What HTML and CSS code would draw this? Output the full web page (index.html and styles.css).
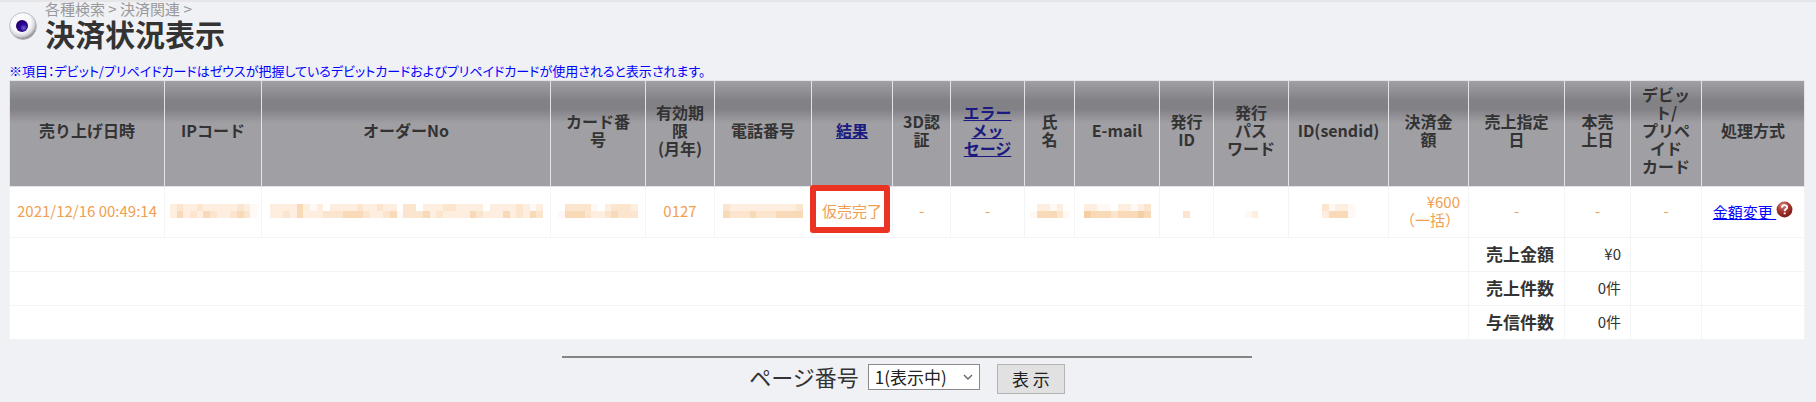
FILE: index.html
```html
<!DOCTYPE html>
<html lang="ja">
<head>
    <meta charset="UTF-8">
    <meta name="viewport" content="width=device-width, initial-scale=1.0">
    <title>決済状況表示</title>
    <link rel="stylesheet" href="styles.css">
</head>
<body>
    <header class="page-head">
        <svg class="bullet" viewBox="0 0 28 28" aria-hidden="true">
            <defs>
                <radialGradient id="ring" cx="42%" cy="36%" r="62%">
                    <stop offset="0.6" stop-color="#fafafc"/>
                    <stop offset="0.85" stop-color="#d0d0d4"/>
                    <stop offset="1" stop-color="#8c8c92"/>
                </radialGradient>
                <radialGradient id="core" cx="64%" cy="66%" r="60%">
                    <stop offset="0" stop-color="#7468c8"/>
                    <stop offset="0.5" stop-color="#2c0a96"/>
                    <stop offset="1" stop-color="#220070"/>
                </radialGradient>
            </defs>
            <circle cx="14" cy="14" r="13.4" fill="url(#ring)" stroke="#b4b4b8" stroke-width="0.8"/>
            <circle cx="13" cy="14" r="6" fill="url(#core)"/>
        </svg>
        <div>
            <p class="crumbs">各種検索 &gt; 決済関連 &gt;</p>
            <h1>決済状況表示</h1>
        </div>
    </header>

    <p class="note">※項目：デビット/プリペイドカードはゼウスが把握しているデビットカードおよびプリペイドカードが使用されると表示されます。</p>

    <table class="result">
        <colgroup>
            <col class="c-date"><col class="c-ip"><col class="c-order"><col class="c-card"><col class="c-exp">
            <col class="c-tel"><col class="c-status"><col class="c-3d"><col class="c-error"><col class="c-name">
            <col class="c-mail"><col class="c-pid"><col class="c-pass"><col class="c-send"><col class="c-amount">
            <col class="c-due"><col class="c-sale"><col class="c-debit"><col class="c-action">
        </colgroup>
        <thead>
            <tr>
                <th>売り上げ日時</th>
                <th>IPコード</th>
                <th>オーダーNo</th>
                <th>カード番<br>号</th>
                <th>有効期<br>限<br>(月年)</th>
                <th>電話番号</th>
                <th><a href="#">結果</a></th>
                <th>3D認<br>証</th>
                <th><a href="#">エラー<br>メッ<br>セージ</a></th>
                <th>氏<br>名</th>
                <th>E-mail</th>
                <th>発行<br>ID</th>
                <th>発行<br>パス<br>ワード</th>
                <th>ID(sendid)</th>
                <th>決済金<br>額</th>
                <th>売上指定<br>日</th>
                <th>本売<br>上日</th>
                <th>デビッ<br>ト/<br>プリペ<br>イド<br>カード</th>
                <th>処理方式</th>
            </tr>
        </thead>
        <tbody>
            <tr class="entry">
                <td>2021/12/16 00:49:14</td>
                <td class="mask" data-top="2322322222321" data-bottom="2423243223431"></td>
                <td class="mask" data-top="22224212022223223220330222332222022223212" data-bottom="22324222333444322341333423222243222423243"></td>
                <td class="mask" data-top="033331023332" data-bottom="144432234333"></td>
                <td>0127</td>
                <td class="mask" data-top="322222222223" data-bottom="433343334444"></td>
                <td class="marked">仮売完了</td>
                <td>-</td>
                <td>-</td>
                <td class="mask" data-top="022120" data-bottom="144431"></td>
                <td class="mask" data-top="2211022123" data-bottom="5444344454"></td>
                <td class="mask" data-top="0" data-bottom="3"></td>
                <td class="mask" data-top="00" data-bottom="12"></td>
                <td class="mask" data-top="31221" data-bottom="24441"></td>
                <td class="amount">¥600<br>（一括）</td>
                <td>-</td>
                <td>-</td>
                <td>-</td>
                <td class="action"><a href="#">金額変更&nbsp;</a><svg class="help" viewBox="0 0 18 18" role="img" aria-label="ヘルプ">
                    <defs>
                        <radialGradient id="red" cx="40%" cy="25%" r="75%">
                            <stop offset="0" stop-color="#d88c84"/>
                            <stop offset="0.5" stop-color="#a8372e"/>
                            <stop offset="1" stop-color="#7c1a16"/>
                        </radialGradient>
                    </defs>
                    <circle cx="9" cy="9" r="8.4" fill="url(#red)"/>
                    <path d="M6.2 7C6.4 3.4 12 3.6 11.8 6.8C11.6 8.6 9.2 8.6 9.2 10.8M9.2 12.2V14" fill="none" stroke="#fff" stroke-width="2"/>
                </svg></td>
            </tr>
            <tr class="total">
                <td colspan="15"></td>
                <th scope="row">売上金額</th>
                <td>¥0</td>
                <td></td>
                <td></td>
            </tr>
            <tr class="total">
                <td colspan="15"></td>
                <th scope="row">売上件数</th>
                <td>0件</td>
                <td></td>
                <td></td>
            </tr>
            <tr class="total">
                <td colspan="15"></td>
                <th scope="row">与信件数</th>
                <td>0件</td>
                <td></td>
                <td></td>
            </tr>
        </tbody>
    </table>

    <form class="pager">
        <label for="page">ページ番号</label>
        <span class="select-wrap">
            <select id="page"><option>1(表示中)</option></select>
            <svg viewBox="0 0 10 6" aria-hidden="true"><path d="M1 1L5 5L9 1" fill="none" stroke="#666" stroke-width="1.4"/></svg>
        </span>
        <button type="button">表 示</button>
    </form>

    <script src="mask.js"></script>
</body>
</html>
```
FILE: styles.css
```css
* {
    box-sizing: border-box;
}
body {
    margin: 0;
    padding: 0 11px 8px 9px;
    border-top: 2px solid #e6e6e8;
    background-color: #f0f1f5;
    color: #333;
    font-family: "Noto Sans CJK JP", sans-serif;
    font-size: 15px;
    line-height: 18px;
}
.page-head {
    display: flex;
    gap: 8px;
    height: 59px;
}
.bullet {
    width: 28px;
    height: 28px;
    margin-top: 10px;
}
.crumbs {
    margin: 0;
    color: #999;
    font-size: 15px;
    line-height: 13px;
}
h1 {
    margin: 0;
    font-size: 30px;
    line-height: 36px;
}
.note {
    margin: 0;
    color: #00f;
    font-size: 13px;
    line-height: 19px;
    white-space: nowrap;
    font-feature-settings: "palt";
}
.result {
    width: 100%;
    table-layout: fixed;
    border-collapse: collapse;
}
.c-date { width: 155px; }
.c-ip { width: 97px; }
.c-order { width: 289px; }
.c-card { width: 95px; }
.c-exp { width: 69px; }
.c-tel { width: 97px; }
.c-status { width: 81px; }
.c-3d { width: 58px; }
.c-error { width: 74px; }
.c-name { width: 50px; }
.c-mail { width: 85px; }
.c-pid { width: 54px; }
.c-pass { width: 75px; }
.c-send { width: 100px; }
.c-amount { width: 80px; }
.c-due { width: 96px; }
.c-sale { width: 66px; }
.c-debit { width: 71px; }
.c-action { width: 103px; }

.result th,
.result td {
    padding: 0;
    border: 1px solid #f2f4f5;
    text-align: center;
    white-space: nowrap;
}
.result thead th {
    height: 106px;
    padding-bottom: 8px;
    border-color: #e4e4e8;
    background: linear-gradient(#a09fa4 0%, #828186 18%, #828186 26%, #a09fa4 40%, #a09fa4 100%);
    font-size: 16px;
}
.result thead a {
    color: #1a1a80;
}
.result td {
    background-color: #fff;
}
.entry td {
    height: 51px;
    padding-bottom: 2px;
    color: #f0a050;
}
.result .marked {
    position: relative;
}
.marked::after {
    content: "";
    position: absolute;
    inset: -2px 2px 4px -2px;
    border: 6px solid #ea3323;
    border-radius: 3px;
}
.result .amount {
    padding-right: 8px;
    text-align: right;
}
.action a {
    color: #00f;
}
.help {
    width: 17px;
    height: 17px;
}
.mask svg {
    display: block;
    height: 14px;
    margin: 0 auto;
}
.m1 { fill: #fef9f5; }
.m2 { fill: #fdeee0; }
.m3 { fill: #fbe5cf; }
.m4 { fill: #f8d9b8; }
.m5 { fill: #f5cfa4; }

.result .total th,
.result .total td {
    height: 34px;
    padding-bottom: 2px;
}
.result .total th {
    padding-right: 10px;
    background-color: #fff;
    font-size: 17px;
    text-align: right;
}
.result .total td {
    padding-right: 9px;
    text-align: right;
}

.pager {
    display: flex;
    justify-content: center;
    align-items: flex-start;
    width: 690px;
    max-width: 100%;
    margin: 16px auto 0;
    padding-top: 6px;
    border-top: 2px solid #858585;
}
.pager label {
    margin-right: 9px;
    font-size: 22px;
    line-height: 24px;
}
.select-wrap {
    position: relative;
    margin-right: 17px;
}
.select-wrap svg {
    position: absolute;
    top: 10px;
    right: 7px;
    width: 10px;
    height: 6px;
    pointer-events: none;
}
.pager select {
    appearance: none;
    width: 112px;
    height: 26px;
    padding: 0 24px 0 6px;
    border: 1px solid #8a8a8a;
    border-radius: 0;
    background-color: #fff;
    color: #222;
    font: 17px/24px "Noto Sans CJK JP", sans-serif;
}
.pager button {
    width: 68px;
    height: 30px;
    padding: 0;
    border: 1px solid #b4b4b4;
    background-color: #e1e1e1;
    color: #222;
    font: 17px/26px "Noto Sans CJK JP", sans-serif;
}
```
FILE: mask.js
```js
// draws the hidden values as two rows of tinted blocks, 0 = blank, 5 = darkest
document.querySelectorAll('.mask').forEach(cell => {
    const rows = [cell.dataset.top, cell.dataset.bottom];
    const width = rows[0].length * 20 / 3;
    let rects = '';
    rows.forEach((row, y) => {
        [...row].forEach((level, x) => {
            if (level !== '0') {
                rects += `<rect class="m${level}" x="${x * 20}" y="${y * 20}" width="20" height="20"/>`;
            }
        });
    });
    cell.innerHTML = `<svg width="${Math.round(width)}" viewBox="0 0 ${rows[0].length * 20} 40" shape-rendering="crispEdges" aria-hidden="true">${rects}</svg>`;
});
```
